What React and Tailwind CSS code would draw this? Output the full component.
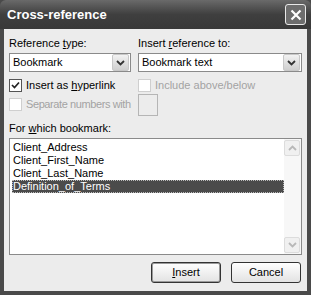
import React from "react";

const font = { fontFamily: '"Liberation Sans", Arial, sans-serif' };

function Chevron({ disabled }) {
  return (
    <svg width="9" height="6" viewBox="0 0 9 6">
      <path d="M1 1 L4.5 4.5 L8 1" fill="none" stroke={disabled ? "#b8b8b8" : "#333"} strokeWidth="1.8" />
    </svg>
  );
}

function DropButton() {
  return (
    <div className="w-[17px] h-[17px] flex items-center justify-center rounded-[2px] border border-[#c8c8c8] bg-gradient-to-b from-[#f2f2f2] to-[#cfcfcf]">
      <Chevron />
    </div>
  );
}

function Select({ value }) {
  return (
    <div className="h-[19px] flex items-center justify-between border border-[#8a8a8a] bg-white pl-[3px] pr-px">
      <span>{value}</span>
      <DropButton />
    </div>
  );
}

function Check({ checked, disabled, tight, children }) {
  return (
    <div className={`flex items-center gap-[4px] whitespace-nowrap ${disabled ? "text-[#a3a3a3]" : "text-black"}`}>
      <div className={`w-[13px] h-[13px] shrink-0 border flex items-center justify-center bg-white ${disabled ? "border-[#cfcfcf]" : "border-[#555]"}`}>
        {checked && (
          <svg width="9" height="9" viewBox="0 0 9 9">
            <path d="M1 4 L3.5 6.5 L8 1.5" fill="none" stroke="#222" strokeWidth="1.7" />
          </svg>
        )}
      </div>
      <span className={tight ? "tracking-[-0.4px]" : ""}>{children}</span>
    </div>
  );
}

export default function App() {
  const items = ["Client_Address", "Client_First_Name", "Client_Last_Name", "Definition_of_Terms"];
  return (
    <div className="w-[311px] h-[295px] bg-[#4a4a4a] flex flex-col text-[11px] leading-[13px]" style={font}>
      {/* title bar */}
      <div className="h-[29px] shrink-0 flex items-center justify-between pl-[7px] pr-[5px] bg-gradient-to-b from-[#6a6a6a] via-[#3f3f3f] to-[#383838] rounded-t-[6px]">
        <span className="text-white font-bold text-[13px]">Cross-reference</span>
        <div className="w-[21px] h-[21px] rounded-[3px] border border-[#e8e8e8] bg-[#6d6d6d] flex items-center justify-center">
          <svg width="12" height="12" viewBox="0 0 12 12">
            <path d="M1.5 1.5 L10.5 10.5 M10.5 1.5 L1.5 10.5" stroke="#fff" strokeWidth="2.2" />
          </svg>
        </div>
      </div>

      {/* body */}
      <div className="flex-1 mx-[4px] mb-[4px] bg-[#ececec] flex flex-col px-[5px] pt-[8px]">
        <div className="flex gap-[7px]">
          <div className="w-[122px] flex flex-col gap-[3px]">
            <span>Reference <u>t</u>ype:</span>
            <Select value="Bookmark" />
          </div>
          <div className="flex-1 flex flex-col gap-[3px]">
            <span>Insert <u>r</u>eference to:</span>
            <Select value="Bookmark text" />
          </div>
        </div>

        <div className="flex gap-[7px] mt-[6px]">
          <div className="w-[122px] flex flex-col gap-[6px] pt-px">
            <Check checked>Insert as <u>h</u>yperlink</Check>
            <Check disabled tight>Separate numbers with</Check>
          </div>
          <div className="flex-1 flex flex-col gap-[2px] pt-px">
            <Check disabled>Include above/below</Check>
            <div className="w-[20px] h-[22px] border border-[#b5b5b5] bg-[#ececec]" />
          </div>
        </div>

        <span className="mt-[6px]">For <u>w</u>hich bookmark:</span>

        <div className="mt-[3px] h-[117px] border border-[#8a8a8a] bg-white flex">
          <div className="flex-1 flex flex-col pl-[2px] pt-[2px]">
            {items.map((it, i) => (
              <div
                key={it}
                className={`h-[13px] leading-[13px] pl-px ${i === 3 ? "bg-[#4b4b4b] text-white outline outline-1 outline-dotted outline-[#bbb] -outline-offset-1" : ""}`}
              >
                {it}
              </div>
            ))}
          </div>
          <div className="w-[17px] flex flex-col justify-between py-px pr-px bg-[#f7f7f7]">
            <div className="h-[16px] rounded-[2px] border border-[#dcdcdc] bg-[#f0f0f0] flex items-center justify-center">
              <svg width="9" height="6" viewBox="0 0 9 6">
                <path d="M1 5 L4.5 1.5 L8 5" fill="none" stroke="#b8b8b8" strokeWidth="1.8" />
              </svg>
            </div>
            <div className="h-[16px] rounded-[2px] border border-[#dcdcdc] bg-[#f0f0f0] flex items-center justify-center">
              <Chevron disabled />
            </div>
          </div>
        </div>

        <div className="flex justify-end gap-[10px] mt-[7px] pr-[1px]">
          <button className="w-[70px] h-[21px] rounded-[3px] border border-[#333] bg-gradient-to-b from-white to-[#e2e2e2] shadow-[inset_0_0_0_1px_#9a9a9a]">
            <u>I</u>nsert
          </button>
          <button className="w-[70px] h-[21px] rounded-[3px] border border-[#333] bg-gradient-to-b from-white to-[#e2e2e2]">
            Cancel
          </button>
        </div>
      </div>
    </div>
  );
}
